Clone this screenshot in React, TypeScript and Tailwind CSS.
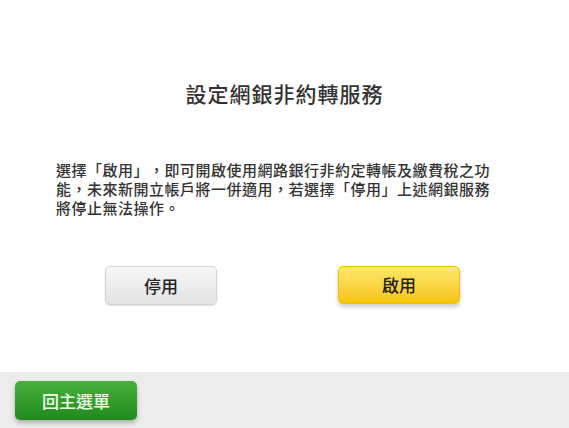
export default function App() {
  return (
    <div
      className="w-[569px] h-[428px] flex flex-col bg-white text-[#333] [text-spacing-trim:space-all]"
      style={{ fontFamily: '"Noto Sans CJK TC", "Noto Sans", sans-serif' }}
    >
      <div className="flex-1 flex flex-col">
        <h1 className="mt-[79px] text-center text-[21px] tracking-[1px] leading-[28px] font-medium text-[#333]">
          設定網銀非約轉服務
        </h1>
        <p className="mt-[53px] ml-[56px] w-[440px] text-[15px] tracking-[0.5px] leading-[19px] font-medium text-[#333]">
          選擇「啟用」，即可開啟使用網路銀行非約定轉帳及繳費稅之功能，未來新開立帳戶將一併適用，若選擇「停用」上述網銀服務將停止無法操作。
        </p>
        <div className="mt-[49px] flex">
          <button className="ml-[105px] w-[112px] h-[39px] rounded-[5px] border border-[#d4d4d4] bg-gradient-to-b from-[#f7f7f7] to-[#e3e3e3] text-[17px] font-medium text-[#222] shadow-[0_1px_2px_rgba(0,0,0,0.12)]">
            停用
          </button>
          <button className="ml-[121px] w-[122px] h-[38px] rounded-[5px] border border-[#f0c000] bg-gradient-to-b from-[#ffe866] to-[#f6c400] text-[17px] font-medium text-[#222] shadow-[0_3px_4px_rgba(0,0,0,0.2)]">
            啟用
          </button>
        </div>
      </div>
      <div className="h-[56px] bg-[#ececec] pt-[9px] pl-[15px]">
        <button className="w-[122px] h-[39px] rounded-[5px] bg-gradient-to-b from-[#46b23c] to-[#1e8a19] text-[17px] font-medium text-[#f0ffe8] shadow-[0_3px_4px_rgba(0,0,0,0.25)]">
          回主選單
        </button>
      </div>
    </div>
  );
}
